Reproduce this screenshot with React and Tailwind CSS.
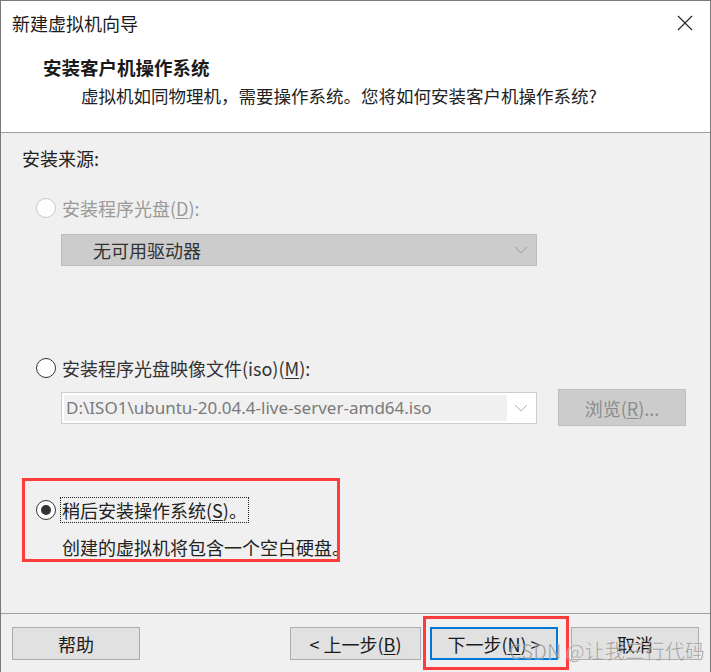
import React from "react";

const F = { fontFamily: '"Noto Sans CJK SC", "Noto Sans", sans-serif' };

function Radio({ disabled, checked }) {
  return (
    <div
      className={`w-[20px] h-[20px] rounded-full bg-white flex items-center justify-center shrink-0 border ${
        disabled ? "border-[#c8c8c8]" : "border-[#333333]"
      }`}
    >
      {checked && <div className="w-[10px] h-[10px] rounded-full bg-[#333333]" />}
    </div>
  );
}

function Chevron({ color }) {
  return (
    <svg width="14" height="8" viewBox="0 0 14 8" fill="none">
      <path d="M1 1 L7 7 L13 1" stroke={color} strokeWidth="1" />
    </svg>
  );
}

export default function App() {
  return (
    <div
      className="w-[711px] h-[672px] flex flex-col bg-[#f0f0f0] border-x border-t border-[#7a7a7a] relative overflow-hidden text-[#1a1a1a]"
      style={F}
    >
      {/* white header */}
      <div className="bg-white h-[132px] flex flex-col border-b border-[#a0a0a0] shrink-0">
        <div className="h-[44px] flex items-center justify-between pl-[11px] pr-[17px]">
          <span className="text-[18px] leading-none">新建虚拟机向导</span>
          <svg width="16" height="16" viewBox="0 0 16 16">
            <path d="M1 1 L15 15 M15 1 L1 15" stroke="#222" strokeWidth="1.1" />
          </svg>
        </div>
        <div className="pl-[42px] mt-[10px] text-[18.5px] font-bold leading-[24px]">安装客户机操作系统</div>
        <div className="pl-[80px] mt-[5px] text-[17.5px] leading-[24px] text-[#222]">
          虚拟机如同物理机，需要操作系统。您将如何安装客户机操作系统?
        </div>
      </div>

      {/* body */}
      <div className="flex-1 flex flex-col pl-[21px] relative">
        <div className="mt-[13px] text-[18px] leading-[24px] text-[#222]">安装来源:</div>

        <div className="mt-[26px] flex items-center gap-[6px] pl-[14px] h-[24px]">
          <Radio disabled />
          <span className="text-[18px] text-[#9a9a9a] leading-none">
            安装程序光盘(<span className="underline underline-offset-2">D</span>):
          </span>
        </div>

        <div className="mt-[14px] ml-[39px] w-[476px] h-[32px] bg-[#cccccc] border border-[#bdbdbd] flex items-center justify-between pl-[31px] pr-[8px]">
          <span className="text-[18px] text-[#333] leading-none">无可用驱动器</span>
          <Chevron color="#9a9a9a" />
        </div>

        <div className="mt-[90px] flex items-center gap-[6px] pl-[14px] h-[24px]">
          <Radio />
          <span className="text-[18px] text-[#333] leading-none">
            安装程序光盘映像文件(iso)(<span className="underline underline-offset-2">M</span>):
          </span>
        </div>

        <div className="mt-[9px] ml-[39px] flex items-center">
          <div className="w-[476px] h-[32px] bg-white border border-[#cdcdcd] flex items-center p-[2px]">
            <div className="w-[443px] h-full bg-[#f0f0f0] flex items-center pl-[2px]">
              <span className="text-[17px] text-[#7a7a7a] leading-none" style={{ fontFamily: '"Noto Sans", sans-serif' }}>
                D:\ISO1\ubuntu-20.04.4-live-server-amd64.iso
              </span>
            </div>
            <div className="flex-1 flex justify-center">
              <Chevron color="#b0b0b0" />
            </div>
          </div>
          <div className="ml-[21px] w-[128px] h-[37px] bg-[#cccccc] border border-[#bfbfbf] flex items-center justify-center">
            <span className="text-[18px] text-[#8c8c8c] leading-none">
              浏览(<span className="underline underline-offset-2">R</span>)...
            </span>
          </div>
        </div>

        <div className="mt-[72px] flex items-center gap-[4px] pl-[14px] h-[24px]">
          <Radio checked />
          <span className="text-[18px] text-[#222] leading-none border border-dotted border-[#222] px-[1px] py-[3px]">
            稍后安装操作系统(<span className="underline underline-offset-2">S</span>)。
          </span>
        </div>

        <div className="mt-[13px] pl-[40px] text-[18px] text-[#222] leading-[24px]">创建的虚拟机将包含一个空白硬盘。</div>
      </div>

      {/* footer */}
      <div className="h-[59px] border-t border-[#a0a0a0] shrink-0 flex items-start pt-[13px] pl-[11px]">
        <div className="w-[128px] h-[33px] bg-[#e1e1e1] border border-[#adadad] flex items-center justify-center text-[18px] leading-none">
          帮助
        </div>
        <div className="ml-[150px] w-[131px] h-[33px] bg-[#e1e1e1] border border-[#adadad] flex items-center justify-center text-[18px] leading-none">
          &lt; 上一步(<span className="underline underline-offset-2">B</span>)
        </div>
        <div className="ml-[9px] w-[128px] h-[33px] bg-[#e1e1e1] border-2 border-[#0078d7] flex items-center justify-center text-[18px] leading-none">
          下一步(<span className="underline underline-offset-2">N</span>) &gt;
        </div>
        <div className="ml-[13px] w-[128px] h-[33px] bg-[#e1e1e1] border border-[#adadad] flex items-center justify-center text-[18px] leading-none">
          取消
        </div>
      </div>

      {/* annotation overlays */}
      <div className="absolute left-[21px] top-[477px] w-[318px] h-[84px] border-[3px] border-[#ff3b3b] pointer-events-none" />
      <div className="absolute left-[422px] top-[615px] w-[146px] h-[54px] border-[3px] border-[#ff3b3b] pointer-events-none" />
      <div
        className="absolute left-[508px] top-[640px] text-[20px] leading-none text-[rgba(110,110,110,0.6)] pointer-events-none"
        style={{ WebkitTextStroke: "0.5px rgba(255,255,255,0.6)" }}
      >
        CSDN @让我三行代码
      </div>
    </div>
  );
}
